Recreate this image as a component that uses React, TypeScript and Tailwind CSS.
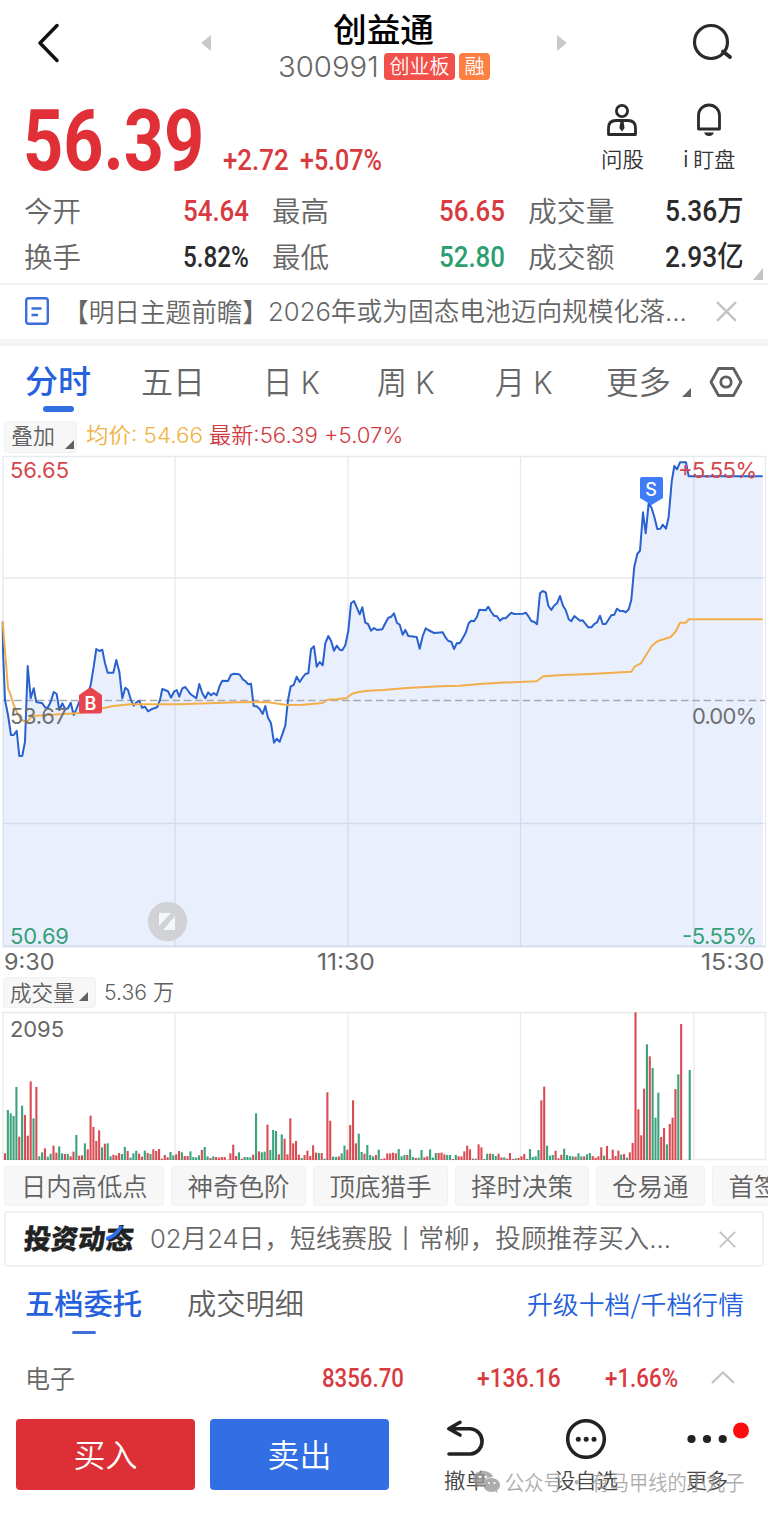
import { useLayoutEffect, useRef } from "react";
import type { ReactNode } from "react";

const lift = ["", "-translate-y-px", "-translate-y-[2px]"];

/** Text squeezed or stretched horizontally to fill the width given by its classes. */
function Fit({ className, up = 1, children }: { className: string; up?: 0 | 1 | 2; children: ReactNode }) {
  const outer = useRef<HTMLSpanElement>(null);
  const inner = useRef<HTMLSpanElement>(null);
  useLayoutEffect(() => {
    if (outer.current && inner.current) {
      inner.current.style.transform = `scaleX(${outer.current.clientWidth / inner.current.offsetWidth})`;
    }
  }, []);
  return (
    <span ref={outer} className={`block shrink-0 whitespace-nowrap leading-none ${lift[up]} ${className}`}>
      <span ref={inner} className="inline-block origin-left">
        {children}
      </span>
    </span>
  );
}

const din = "font-['Roboto','Noto_Sans_CJK_SC',sans-serif]";
const inter = "font-['Inter','Noto_Sans_CJK_SC',sans-serif]";

type Pt = [number, number];
const place = (ox: number, oy: number, pts: number[]): Pt[] => {
  const out: Pt[] = [];
  for (let i = 0; i < pts.length; i += 2) out.push([ox + pts[i] / 3, oy + pts[i + 1] / 3]);
  return out;
};
const toPath = (pts: Pt[]) => "M" + pts.map(([x, y]) => `${x.toFixed(1)} ${y.toFixed(1)}`).join("L");

const priceLine: Pt[] = [
  ...place(0, -5, [8,515,9,600,15,750,24,795,33,855,41,855,50,842,58,918,67,917,75,875,83,648,92,745,101,715,109,756,127,760,136,773,144,772,152,755,161,726,170,732,178,780,187,760,196,778,204,775,212,758,221,795,230,775,238,755,264,730,272,705,281,650,289,597,298,603,307,599,315,640,323,668,340,668,349,630,358,665,367,745,376,713,384,720,392,748,401,767,409,757,418,752,426,773,435,770,444,784,454,778,471,772,480,750,487,717,504,724,513,743,522,725,530,720,538,740,547,715,556,711,572,733,589,745,598,702,607,730,616,745,625,727,633,736,641,729,650,736,659,707,667,692,684,693,693,674,702,671,717,673]),
  ...place(240, 105, [0,345,8,358,16,363,25,373,33,371,41,438,50,439,59,447,68,462,76,438,84,473,93,490,102,548,110,536,119,545,127,523,136,497,144,420,152,379,161,375,170,350,179,366,187,354,196,342,205,340,213,268,222,259,230,320,239,306,248,316,256,250,265,228,273,242,282,272,290,257,299,269,307,271,316,256,325,213,333,130,342,123,350,142,359,163,367,142,376,188,384,192,393,212,402,204,411,210,427,208,436,190,445,173,454,170,462,160,471,189,479,194,488,224,496,210,505,228,530,231,539,266,548,228,557,205,565,210,582,219,608,217,617,233,625,243,634,245,642,267,651,249,659,250,668,235,677,218,686,190,694,182,702,184,711,170,718,149]),
  ...place(480, -5, [0,479,17,481,25,470,34,486,42,497,51,499,60,512,68,505,77,505,94,488,102,492,130,491,137,488,146,500,154,513,163,516,171,523,180,430,188,423,197,427,205,467,214,480,222,467,231,460,240,438,249,467,257,480,266,508,274,514,283,498,300,512,308,511,325,532,334,532,343,522,351,517,360,497,368,522,377,522,385,510,394,496,403,494,411,476,420,483,430,483,437,487,446,478,454,450,463,350,472,312,480,302,489,187,497,250,506,158,515,175,523,200,532,237,541,236,548,224,558,236,566,200,575,95,583,48,591,58,600,37,618,37,626,79,848,79]),
];
const averageLine: Pt[] = [
  ...place(0, -5, [8,515,24,715,32,735,41,765,50,785,62,808,75,815,85,812,95,798,240,789,340,768,390,763,540,763,715,757]),
  ...place(240, 105, [0,427,80,426,140,435,190,434,248,429,262,419,290,418,320,414,335,402,355,396,385,392,430,390,500,384,600,379,660,377]),
  ...place(480, -5, [0,702,60,698,170,694,190,679,250,675,330,672,454,665,465,649,483,640,515,588,532,574,572,561,588,543,600,518,618,518,626,508,848,508]),
];
const linePath = toPath(priceLine);

/** One entry a minute: direction and height in thirds of a pixel. */
const volume =
  "R20 G150 G140 G132 G219 R70 G163 R135 R73 R236 G125 R219 G11 G23 R35 G10 G19 R43 R22 G41 G20 R18 G18 R11 R25 G75 R13 R14 G50 R32 R133 R99 R57 R89 G38 R49 G50 G11 R16 R14 R21 G18 G39 R27 G7 G20 G28 R19 R10 G28 R21 G18 R32 R27 R33 R4 R15 R8 G24 G14 R17 R27 G23 R12 R12 G26 G9 G8 G14 R30 G39 G11 R6 G11 R9 R7 R9 R9 R1 R20 R46 R12 G23 R4 G9 G9 G8 R16 " +
  "G140 R26 G23 G25 R106 G30 G90 G87 R17 G77 R64 R17 R125 R50 R57 R16 G6 R15 R28 R12 R44 R22 G21 R21 G4 R203 R118 G10 G9 R11 G20 G43 R31 R105 R179 R50 G79 G24 R19 G45 G15 G11 R15 G31 R3 R5 R20 R20 R22 R20 G33 G11 G15 R15 G32 G9 R6 G7 G30 R8 R11 G32 G7 G21 R21 R22 R17 G15 G15 R3 G15 R11 R11 R26 R43 R32 R4 G4 R47 R38 G3 G19 R19 " +
  "G18 G12 R19 R8 G8 R4 R21 R3 G5 R6 R11 R18 G3 G33 G9 G11 G30 R179 R220 G43 G13 G15 R28 R5 R16 G34 G15 G12 G11 R10 G20 G11 R11 G17 G21 R12 R7 R11 R38 G13 R42 R3 R31 R12 R28 G16 R18 G7 R23 R51 R443 R152 R74 R214 G347 R311 G276 G127 G202 R69 R96 G47 R108 R127 R213 G257 R408 R0 R0 G270";
const bars = volume.split(" ").map((b) => ({ up: b[0] === "R", h: Number(b.slice(1)) / 3 }));

function Corner({ className }: { className: string }) {
  return (
    <svg viewBox="0 0 9 9" preserveAspectRatio="none" className={`shrink-0 ${className}`}>
      <path d="M9 0V9H0Z" fill="currentColor" />
    </svg>
  );
}

function Cross({ className }: { className: string }) {
  return (
    <svg viewBox="0 0 20 20" className={`shrink-0 text-[#c4c4c4] ${className}`}>
      <path d="M1 1L19 19M19 1L1 19" stroke="currentColor" strokeWidth="2.4" />
    </svg>
  );
}

function Header() {
  return (
    <header className="flex h-[90px] items-start">
      <svg viewBox="0 0 22 40" className="ml-[37px] mt-[23px] h-10 w-[22px]" fill="none">
        <path d="M20 2.5L3 20L20 37.5" stroke="#111" strokeWidth="3.4" strokeLinecap="round" strokeLinejoin="round" />
      </svg>
      <svg viewBox="0 0 10 16" className="ml-[142px] mt-[35px] h-4 w-2.5">
        <path d="M10 0V16L0 8Z" fill="#c8c8c8" />
      </svg>
      <div className="ml-[67px] flex w-[212px] flex-col pt-[13px]">
        <Fit className="ml-[55px] w-[101px] text-[33px] font-medium text-black">创益通</Fit>
        <div className="mt-[7px] flex h-[27px] items-center">
          <Fit up={0} className="w-[101px] font-['Inter'] text-[29px] font-light text-[#666]">300991</Fit>
          <span className="ml-[5px] flex h-[27px] w-[71px] items-center justify-center rounded-[4px] bg-[#f2504a] text-white">
            <Fit className="w-[60px] text-[20px]">创业板</Fit>
          </span>
          <span className="ml-1 flex h-[27px] w-[31px] items-center justify-center rounded-[4px] bg-[#fb8042] text-white">
            <Fit className="w-[20px] text-[20px]">融</Fit>
          </span>
        </div>
      </div>
      <svg viewBox="0 0 10 16" className="ml-[67px] mt-[35px] h-4 w-2.5">
        <path d="M0 0V16L10 8Z" fill="#c8c8c8" />
      </svg>
      <svg viewBox="0 0 42 38" className="ml-[125px] mt-[23px] h-[38px] w-[42px]" fill="none" stroke="#2b2b2b" strokeWidth="3.200">
        <circle cx="19" cy="19" r="16.5" />
        <path d="M31 28.500L38 34" strokeWidth="3.800" strokeLinecap="round" />
      </svg>
    </header>
  );
}

function Quote() {
  return (
    <section className="flex h-[99px] items-start pt-[13px]">
      <Fit up={0} className={`ml-[23px] mt-[-3px] w-[181px] text-[84.500px] font-bold text-[#e02f37] ${din}`}>56.39</Fit>
      <Fit up={0} className={`ml-[19px] mt-[43px] w-[66px] text-[29px] font-medium text-[#d93a40] ${din}`}>+2.72</Fit>
      <Fit up={0} className={`ml-[11px] mt-[43px] w-[82px] text-[29px] font-medium text-[#d93a40] ${din}`}>+5.07%</Fit>
      <div className="ml-[218px] flex w-[44px] flex-col items-center">
        <svg viewBox="0 0 32 34" className="h-[34px] w-8" fill="none" stroke="#2b2b2b" strokeWidth="2.8">
          <circle cx="16" cy="8" r="5.6" />
          <path d="M2.500 31.500V25Q2.500 17.500 10 17.500H22Q29.500 17.500 29.500 25V31.500Z" strokeLinejoin="round" />
          <path d="M14.500 18H17.500L18.600 25L16 28.500L13.400 25Z" fill="#2b2b2b" stroke="none" />
        </svg>
        <Fit up={0} className="mt-[11px] w-[43px] text-[21px] text-[#333]">问股</Fit>
      </div>
      <div className="ml-[39px] flex w-[52px] flex-col items-center">
        <svg viewBox="0 0 28 34" className="h-[34px] w-7" fill="none" stroke="#2b2b2b" strokeWidth="2.800">
          <path d="M3.500 26V12.500A10.500 10.500 0 0 1 24.500 12.500V26Z" strokeLinejoin="round" />
          <path d="M9 29.500H19Q17.500 33 14 33T9 29.500Z" fill="#2b2b2b" stroke="none" />
        </svg>
        <Fit up={0} className="mt-[11px] w-[52px] text-[21px] text-[#333]">i 盯盘</Fit>
      </div>
    </section>
  );
}

function Stats() {
  const num = `text-[29px] font-medium ${din}`;
  return (
    <section className="flex h-[96px] flex-col border-b-2 border-[#f0f0f0] text-[28.5px] text-[#666]">
      <div className="flex h-[45px] items-center">
        <Fit className="ml-6 w-[57px]">今开</Fit>
        <Fit up={0} className={`ml-[102px] w-[66px] text-[#d93a40] ${num}`}>54.64</Fit>
        <Fit className="ml-[23px] w-[57px]">最高</Fit>
        <Fit up={0} className={`ml-[110px] w-[66px] text-[#d93a40] ${num}`}>56.65</Fit>
        <Fit className="ml-[23px] w-[87px]">成交量</Fit>
        <Fit up={0} className={`ml-[50px] w-[79px] text-[#2b2b2b] ${num}`}>5.36万</Fit>
      </div>
      <div className="flex h-[46px] items-center">
        <Fit className="ml-6 w-[57px]">换手</Fit>
        <Fit up={0} className={`ml-[102px] w-[66px] text-[#2b2b2b] ${num}`}>5.82%</Fit>
        <Fit className="ml-[23px] w-[57px]">最低</Fit>
        <Fit up={0} className={`ml-[110px] w-[66px] text-[#2c9f70] ${num}`}>52.80</Fit>
        <Fit className="ml-[23px] w-[87px]">成交额</Fit>
        <Fit up={0} className={`ml-[50px] w-[79px] text-[#2b2b2b] ${num}`}>2.93亿</Fit>
        <Corner className="ml-[9px] mt-[34px] h-3 w-2.5 text-[#c4c4c4]" />
      </div>
    </section>
  );
}

function News() {
  return (
    <section className="flex h-[61px] items-center border-b-[7px] border-[#f4f4f4]">
      <svg viewBox="0 0 24 28" className="ml-[25px] h-7 w-6 -translate-y-px" fill="none" stroke="#3c6edb" strokeWidth="2.400">
        <rect x="1.200" y="1.200" width="21.600" height="25.600" rx="2.500" />
        <path d="M6.500 11.500H16.500M6.500 18H13" />
      </svg>
      <Fit className="ml-[14px] w-[205px] text-[26px] text-[#666]">【明日主题前瞻】</Fit>
      <Fit up={0} className={`ml-0 w-[419px] text-[26px] text-[#666] ${inter}`}>2026年或为固态电池迈向规模化落...</Fit>
      <Cross className="ml-[29px] h-[21px] w-[21px] -translate-y-px" />
    </section>
  );
}

function PeriodTabs() {
  return (
    <nav className={`flex h-[73px] items-center text-[31.500px] text-[#666] ${inter}`}>
      <div className="ml-[25px] flex h-full w-[66px] flex-col items-center pt-[21px] text-[#2560dd]">
        <Fit up={1} className="w-[66px] font-medium">分时</Fit>
        <span className="mt-[7px] h-1.5 w-[31px] rounded-full bg-[#326fe3]" />
      </div>
      <Fit up={0} className="ml-[50px] w-[64px]">五日</Fit>
      <Fit up={0} className="ml-[58px] w-[57px]">日 K</Fit>
      <Fit up={0} className="ml-[57px] w-[58px]">周 K</Fit>
      <Fit up={0} className="ml-[60px] w-[58px]">月 K</Fit>
      <Fit up={0} className="ml-[53px] w-[65px]">更多</Fit>
      <Corner className="ml-[11px] mt-[20px] h-[9px] w-[9px] text-[#666]" />
      <svg viewBox="0 0 34 30" className="ml-[18px] h-[30px] w-[34px] -translate-y-px" fill="none" stroke="#606060" strokeWidth="2.800" strokeLinejoin="round">
        <path d="M9.500 1.500H24.500L32 15L24.500 28.500H9.500L2 15Z" />
        <circle cx="17" cy="15" r="5.200" />
      </svg>
    </nav>
  );
}

function PriceChart() {
  return (
    <svg viewBox="0 455 768 493" className="block h-[493px] w-full font-['Inter'] text-[22px] font-normal" fill="none">
      <g transform="translate(0 455)">
        <path d={`${linePath}V491.500H3V50Z`} fill="#e9effd" />
      </g>
      <path d="M3 456.500H765.500V946.500H3ZM3 578H765M3 823.500H765M175 456V946M348 456V946M520.500 456V946M694 456V946" stroke="#8090a8" strokeOpacity=".2" strokeWidth="1.300" />
      <path d="M3 946.500H765" stroke="#d5dceb" strokeWidth="1.500" />
      <path d="M3 700.500H765" stroke="#a7a9b0" strokeWidth="1.300" strokeDasharray="7.500 3.800" />
      <g transform="translate(0 455)" strokeWidth="2" strokeLinejoin="round">
        <path d={linePath} stroke="#2961cf" />
        <path d={toPath(averageLine)} stroke="#f2ae4b" />
      </g>
      <path d="M90.500 687L102 695V711Q102 713.500 99.500 713.500H81.500Q79 713.500 79 711V695Z" fill="#e9454f" />
      <text x="90.500" y="709.500" fill="#fff" textAnchor="middle" fontSize="18" fontWeight="600">B</text>
      <path d="M642 477H661Q663 477 663 479V498L651.500 505L640 498V479Q640 477 642 477Z" fill="#3f7df6" />
      <text x="651" y="495.500" fill="#fff" textAnchor="middle" fontSize="18" fontWeight="500">S</text>
      <text x="10" y="477.500" fill="#d4474c" textLength="59">56.65</text>
      <text x="678" y="477.500" fill="#d4474c" textLength="79">+5.55%</text>
      <text x="10" y="723.500" fill="#6f6f72" textLength="57">53.67</text>
      <text x="692" y="723.500" fill="#6f6f72" textLength="65">0.00%</text>
      <text x="10" y="943.500" fill="#35a078" textLength="59">50.69</text>
      <text x="682" y="943.500" fill="#35a078" textLength="75">-5.55%</text>
      <circle cx="167.500" cy="921.500" r="19.700" fill="#d0d2d6" />
      <path d="M159 913H171L159 926ZM175 916V930H163Z" fill="#f4f6fa" />
    </svg>
  );
}

function VolumeChart() {
  return (
    <svg viewBox="0 1011 768 150" className="block h-[150px] w-full font-['Inter'] text-[22px] font-normal" fill="none">
      <path d="M3 1012.500H765.500V1159.500H3ZM175 1012V1160M348 1012V1160M520.500 1012V1160M694 1012V1160" stroke="#eaeaec" strokeWidth="1.300" />
      {bars.map((b, i) => (
        <rect key={i} x={3.95 + i * 2.853} y={1160 - b.h} width="2.100" height={b.h} fill={b.up ? "#d94c54" : "#3aa37b"} />
      ))}
      <text x="10" y="1036.500" fill="#666" textLength="54">2095</text>
    </svg>
  );
}

function Strategies() {
  const chip = "flex h-10 shrink-0 items-center justify-center rounded-[3px] border border-[#f1f1f1] bg-[#f7f7f7]";
  return (
    <div className="mt-[5px] flex h-10 gap-[7px] overflow-hidden pl-1 text-[25.500px] text-[#606060]">
      <span className={`w-[160px] ${chip}`}><Fit className="w-[127px]">日内高低点</Fit></span>
      <span className={`w-[135px] ${chip}`}><Fit className="w-[102px]">神奇色阶</Fit></span>
      <span className={`w-[135px] ${chip}`}><Fit className="w-[102px]">顶底猎手</Fit></span>
      <span className={`w-[134px] ${chip}`}><Fit className="w-[102px]">择时决策</Fit></span>
      <span className={`w-[109px] ${chip}`}><Fit className="w-[77px]">仓易通</Fit></span>
      <span className={`w-[110px] ${chip}`}><Fit className="w-[77px]">首签宝</Fit></span>
    </div>
  );
}

function Promo() {
  return (
    <section className="mx-1 mt-[5px] flex h-14 items-center rounded-[3px] border-2 border-[#f0f0f0]">
      <span className="ml-[18px] flex -skew-x-6 text-[#222]">
        <Fit className="w-[82px] text-[27.500px] font-black [-webkit-text-stroke:0.3px]">投资动</Fit>
        <span className="relative">
          <Fit className="w-[28px] text-[27.500px] font-black [-webkit-text-stroke:0.3px]">态</Fit>
          <svg viewBox="0 0 28 17" className="absolute left-0 top-0 h-[17px] w-7" fill="none">
            <path d="M0 14Q10 11 14 1" stroke="#2f6ff0" strokeWidth="3.600" />
          </svg>
        </span>
      </span>
      <Fit up={0} className={`ml-[16px] w-[521px] text-[26px] text-[#666] ${inter}`}>02月24日，短线赛股丨常柳，投顾推荐买入...</Fit>
      <Cross className="ml-[48px] h-[17px] w-[17px]" />
    </section>
  );
}

function OrderBookTabs() {
  return (
    <nav className="flex h-[76px] items-start pt-[23px]">
      <div className="ml-[25px] flex w-[117px] flex-col items-center text-[#2560dd]">
        <Fit up={2} className="w-[117px] text-[29px] font-medium">五档委托</Fit>
        <span className="mt-[12px] h-[3px] w-6 rounded-full bg-[#3f6fd8]" />
      </div>
      <Fit up={2} className="ml-[45px] w-[117px] text-[29px] text-[#606060]">成交明细</Fit>
      <Fit up={2} className="ml-[223px] mt-[2px] w-[217px] text-[25.500px] text-[#2560dd]">升级十档/千档行情</Fit>
    </nav>
  );
}

function SectorRow() {
  const num = `text-[26px] font-medium text-[#d93a40] ${din}`;
  return (
    <div className="flex h-[70px] items-center">
      <Fit className="ml-[25px] w-[50px] text-[25px] text-[#666]">电子</Fit>
      <Fit up={0} className={`ml-[247px] w-[82px] ${num}`}>8356.70</Fit>
      <Fit up={0} className={`ml-[73px] w-[84px] ${num}`}>+136.16</Fit>
      <Fit up={0} className={`ml-[44px] w-[73px] ${num}`}>+1.66%</Fit>
      <svg viewBox="0 0 24 13" className="ml-[33px] h-[13px] w-6 -translate-y-px" fill="none">
        <path d="M1 12L12 1.500L23 12" stroke="#c4c4c4" strokeWidth="2.400" />
      </svg>
    </div>
  );
}

function ActionBar() {
  return (
    <footer className="relative flex h-[98px] items-start pt-[6px]">
      <button className="ml-4 flex h-[71px] w-[179px] items-center justify-center rounded-[4px] bg-[#dd2f36] text-white">
        <Fit up={2} className="w-[64px] text-[32px]">买入</Fit>
      </button>
      <button className="ml-[15px] flex h-[71px] w-[179px] items-center justify-center rounded-[4px] bg-[#326fe5] text-white">
        <Fit up={2} className="w-[64px] text-[32px]">卖出</Fit>
      </button>
      <div className="ml-[54px] flex w-11 flex-col items-center text-[#444]">
        <svg viewBox="0 0 42 40" className="h-10 w-[42px]" fill="none" stroke="#222" strokeWidth="3.600" strokeLinecap="round" strokeLinejoin="round">
          <path d="M16 3.300L4.800 9.700L16 16M5 9.700H26.500A12.700 12.700 0 0 1 26.500 35H5" />
        </svg>
        <Fit className="mt-[11px] w-[43px] text-[21px]">撤单</Fit>
      </div>
      <div className="ml-[67px] flex w-16 flex-col items-center text-[#444]">
        <svg viewBox="0 0 40 40" className="h-10 w-10" fill="#222">
          <circle cx="20" cy="20" r="18.300" fill="none" stroke="#222" strokeWidth="3.500" />
          <circle cx="12.300" cy="20.200" r="2.500" />
          <circle cx="20.200" cy="20.200" r="2.500" />
          <circle cx="28" cy="20.200" r="2.500" />
        </svg>
        <Fit className="mt-[11px] w-[64px] text-[21px]">设自选</Fit>
      </div>
      <div className="ml-[67px] flex w-11 flex-col items-center text-[#444]">
        <svg viewBox="0 0 40 40" className="h-10 w-10 overflow-visible" fill="#222">
          <circle cx="4.500" cy="20" r="4.100" />
          <circle cx="20" cy="20" r="4.100" />
          <circle cx="35.700" cy="20" r="4.100" />
          <circle cx="54" cy="11.500" r="8" fill="#fb0d0d" />
        </svg>
        <Fit className="mt-[11px] w-[42px] text-[21px]">更多</Fit>
      </div>
      <div className="absolute left-[473px] top-[57px] flex items-center text-[#999] opacity-80">
        <svg viewBox="0 0 27 24" className="h-6 w-[27px]" fill="#999">
          <path d="M10 1C4.500 1 0 4.500 0 9C0 11.500 1.500 13.500 3.500 15L2.700 18L6 16.300Q8 17 10.500 17C10 11 14 7 20 7C19 3.500 15 1 10 1Z" />
          <path d="M18.500 8C14 8 10.500 11 10.500 15S14 22 18.500 22Q20.500 22 22 21.300L24.500 23L24 20.300C26 19 27 17 27 15C27 11 23 8 18.500 8Z" />
          <g fill="#fff">
            <circle cx="7" cy="7" r="1.200" /><circle cx="13" cy="7" r="1.200" />
            <circle cx="16" cy="13" r="1.100" /><circle cx="21.500" cy="13" r="1.100" />
          </g>
        </svg>
        <Fit className="ml-[5px] w-[239px] text-[21px]">公众号 · 有马甲线的小丸子</Fit>
      </div>
    </footer>
  );
}

export default function App() {
  return (
    <main className="h-[1517px] w-[768px] overflow-hidden bg-white font-['Noto_Sans_CJK_SC',sans-serif] font-[350]">
      <Header />
      <Quote />
      <Stats />
      <News />
      <PeriodTabs />
      <div className="flex h-[36px] items-center text-[21.500px]">
        <span className="ml-1 flex h-8 w-[73px] items-center rounded-[3px] border border-[#f1f1f1] bg-[#f7f7f7] text-[#606060]">
          <Fit up={2} className="ml-[6px] w-[44px]">叠加</Fit>
          <Corner className="ml-[10px] mt-[15px] h-[9px] w-[9px]" />
        </span>
        <Fit className={`ml-[9px] w-[117px] text-[#f0b240] ${inter}`}>均价: 54.66</Fit>
        <Fit className={`ml-[6px] w-[194px] text-[#d0393f] ${inter}`}>最新:56.39 +5.07%</Fit>
      </div>
      <PriceChart />
      <div className="flex h-[28px] items-center font-['Inter'] text-[22.500px] font-normal text-[#666]">
        <Fit up={0} className="ml-1 w-[51px]">9:30</Fit>
        <Fit up={0} className="ml-[262px] w-[58px]">11:30</Fit>
        <Fit up={0} className="ml-[326px] w-[63px]">15:30</Fit>
      </div>
      <div className="flex h-[35px] items-center text-[21.500px] text-[#606060]">
        <span className="ml-[3px] flex h-[31px] w-[93px] -translate-y-px items-center rounded-[3px] border border-[#f1f1f1] bg-[#f7f7f7]">
          <Fit className="ml-[6px] w-[65px]">成交量</Fit>
          <Corner className="ml-[4px] mt-[8px] h-[9px] w-[9px]" />
        </span>
        <Fit up={1} className={`ml-[8px] w-[70px] ${inter}`}>5.36 万</Fit>
      </div>
      <VolumeChart />
      <Strategies />
      <Promo />
      <OrderBookTabs />
      <SectorRow />
      <ActionBar />
    </main>
  );
}
